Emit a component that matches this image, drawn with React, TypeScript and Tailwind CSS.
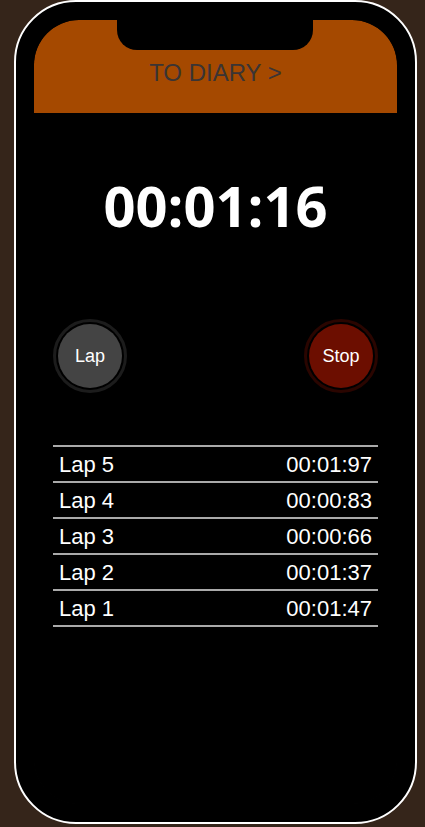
const laps = [
  { name: 'Lap 5', time: '00:01:97' },
  { name: 'Lap 4', time: '00:00:83' },
  { name: 'Lap 3', time: '00:00:66' },
  { name: 'Lap 2', time: '00:01:37' },
  { name: 'Lap 1', time: '00:01:47' },
];

function RoundButton({ label, ring, fill }: { label: string; ring: string; fill: string }) {
  return (
    <div className={`w-[74px] h-[74px] rounded-full border-[3px] ${ring} p-[2px]`}>
      <div className={`w-full h-full rounded-full ${fill} flex items-center justify-center text-white text-[18px]`}>
        {label}
      </div>
    </div>
  );
}

export default function App() {
  return (
    <div className="w-[425px] h-[827px] bg-[#35251a] font-['Liberation_Sans',Arial,sans-serif]">
      {/* Phone body */}
      <div className="ml-[14px] w-[403px] h-[824px] rounded-[62px] border-2 border-white bg-black pt-[18px] px-[18px] pb-[18px]">
        {/* Screen */}
        <div className="relative h-full rounded-[45px] bg-[#060606] overflow-hidden">
          {/* Notch */}
          <div className="absolute left-[83px] top-0 w-[196px] h-[30px] bg-black rounded-b-[20px]" />

          {/* Header */}
          <div className="h-[93px] bg-[#a54900] rounded-t-[45px] flex items-end justify-center pb-[28px]">
            <span className="text-[24px] text-[#3a3434] leading-none">TO DIARY &gt;</span>
          </div>

          {/* Timer */}
          <div className="bg-black">
            <div className="pt-[64px] text-center text-white font-bold text-[56px] leading-none font-['Open_Sans',sans-serif]">
              00:01:16
            </div>

            {/* Buttons */}
            <div className="mt-[86px] flex justify-between px-[19px]">
              <RoundButton label="Lap" ring="border-[#1c1c1c]" fill="bg-[#444444]" />
              <RoundButton label="Stop" ring="border-[#2a0500]" fill="bg-[#6c0e00]" />
            </div>

            {/* Laps */}
            <div className="mt-[52px] mx-[19px] border-t-2 border-[#aaaaaa]">
              {laps.map((l) => (
                <div
                  key={l.name}
                  className="h-[36px] border-b-2 border-[#aaaaaa] flex items-center justify-between px-[6px] text-white text-[22px]"
                >
                  <span>{l.name}</span>
                  <span>{l.time}</span>
                </div>
              ))}
            </div>
            <div className="h-[200px]" />
          </div>
        </div>
      </div>
    </div>
  );
}
